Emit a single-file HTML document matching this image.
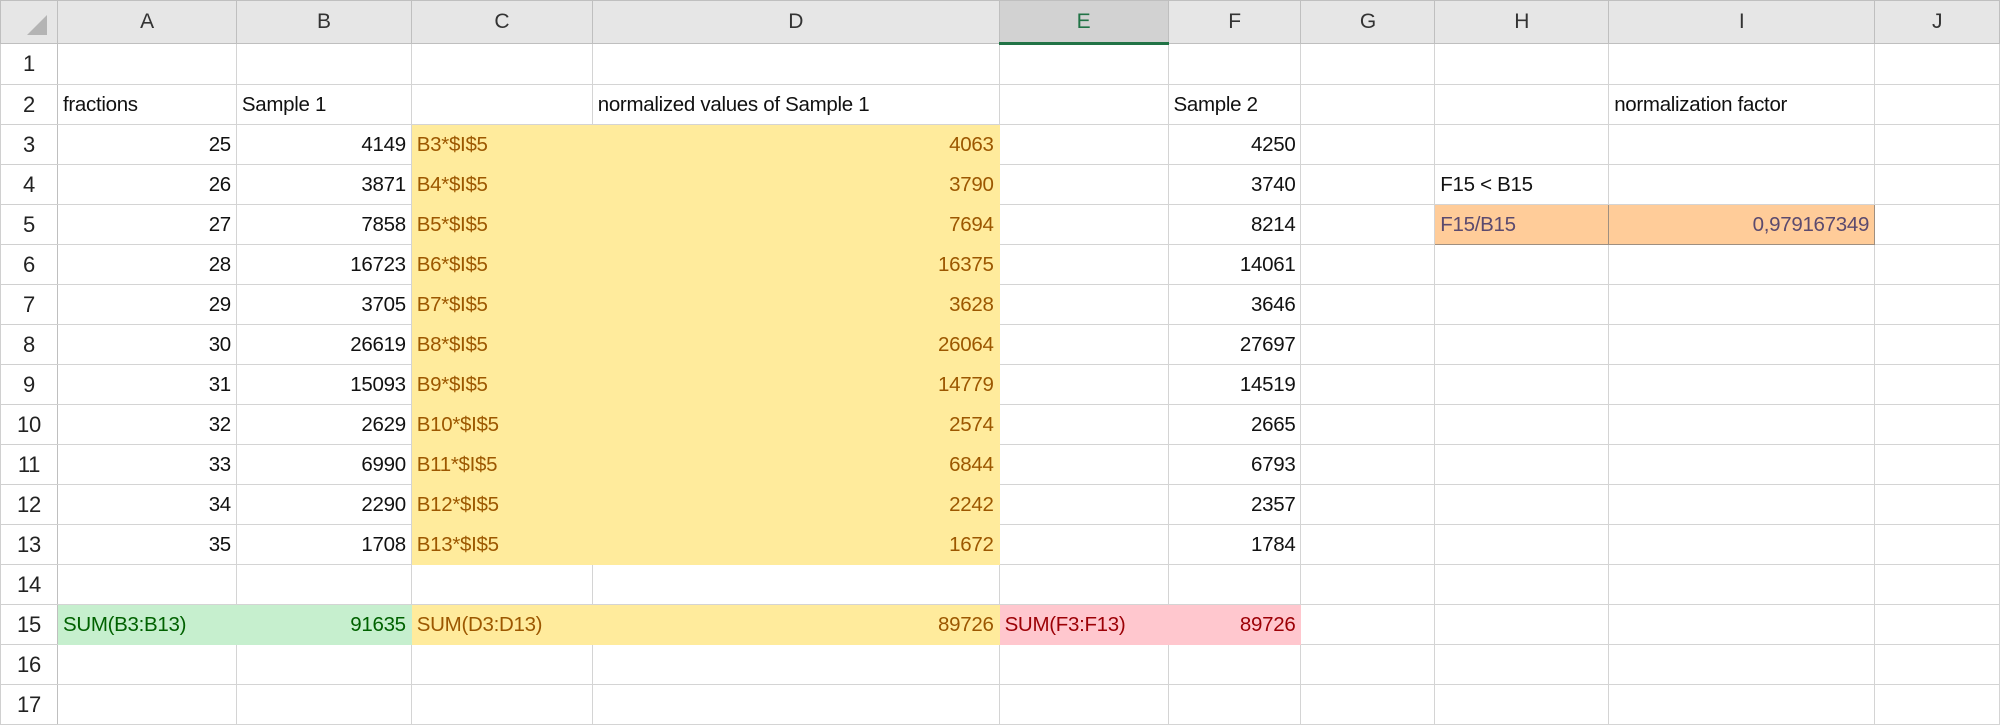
<!DOCTYPE html>
<html><head><style>
body{margin:0;width:2000px;height:722px;overflow:hidden;background:#fff;font-family:"Liberation Sans",sans-serif;}
table{border-collapse:collapse;table-layout:fixed;position:absolute;left:0;top:0;}
td{height:39px;border:1px solid #d4d4d4;padding:0 5px;font-size:20.5px;color:#111;white-space:nowrap;overflow:hidden;letter-spacing:-0.3px;}
td.h{background:#fff;text-align:center;color:#222;border-color:#d0d0d0;border-right-color:#bfbfbf;font-size:22px;}
tr.top td{height:41px;background:#e6e6e6;text-align:center;color:#333;border-color:#bfbfbf;font-size:21px;}
.r{text-align:right}
.y{background:#ffeb9c;color:#9c5700;border-color:#ffeb9c}
.g{background:#c6efce;color:#006100;border-color:#c6efce}
.p{background:#ffc7ce;color:#9c0006;border-color:#ffc7ce}
.o{background:#ffcc99;color:#5b4a6e;border:1px solid #9f8f80}
tr.top td.sel{background:#d2d2d2;color:#217346;border-bottom:3px solid #217346}
</style></head><body>
<table>
<colgroup><col style="width:57px"><col style="width:179px"><col style="width:175px"><col style="width:181px"><col style="width:407px"><col style="width:169px"><col style="width:133px"><col style="width:134px"><col style="width:174px"><col style="width:266px"><col style="width:125px"></colgroup>
<tr class="top"><td><svg width="24" height="24" style="position:relative;left:8px;top:6px"><polygon points="22,2 22,22 2,22" fill="#b4b4b4"/></svg></td><td>A</td><td>B</td><td>C</td><td>D</td><td class="sel">E</td><td>F</td><td>G</td><td>H</td><td>I</td><td>J</td></tr>
<tr><td class="h">1</td><td></td><td></td><td></td><td></td><td></td><td></td><td></td><td></td><td></td><td></td></tr>
<tr><td class="h">2</td><td>fractions</td><td>Sample 1</td><td></td><td>normalized values of Sample 1</td><td></td><td>Sample 2</td><td></td><td></td><td>normalization factor</td><td></td></tr>
<tr><td class="h">3</td><td class="r">25</td><td class="r">4149</td><td class="y">B3*$I$5</td><td class="y r">4063</td><td></td><td class="r">4250</td><td></td><td></td><td></td><td></td></tr>
<tr><td class="h">4</td><td class="r">26</td><td class="r">3871</td><td class="y">B4*$I$5</td><td class="y r">3790</td><td></td><td class="r">3740</td><td></td><td>F15 &lt; B15</td><td></td><td></td></tr>
<tr><td class="h">5</td><td class="r">27</td><td class="r">7858</td><td class="y">B5*$I$5</td><td class="y r">7694</td><td></td><td class="r">8214</td><td></td><td class="o">F15/B15</td><td class="o r">0,979167349</td><td></td></tr>
<tr><td class="h">6</td><td class="r">28</td><td class="r">16723</td><td class="y">B6*$I$5</td><td class="y r">16375</td><td></td><td class="r">14061</td><td></td><td></td><td></td><td></td></tr>
<tr><td class="h">7</td><td class="r">29</td><td class="r">3705</td><td class="y">B7*$I$5</td><td class="y r">3628</td><td></td><td class="r">3646</td><td></td><td></td><td></td><td></td></tr>
<tr><td class="h">8</td><td class="r">30</td><td class="r">26619</td><td class="y">B8*$I$5</td><td class="y r">26064</td><td></td><td class="r">27697</td><td></td><td></td><td></td><td></td></tr>
<tr><td class="h">9</td><td class="r">31</td><td class="r">15093</td><td class="y">B9*$I$5</td><td class="y r">14779</td><td></td><td class="r">14519</td><td></td><td></td><td></td><td></td></tr>
<tr><td class="h">10</td><td class="r">32</td><td class="r">2629</td><td class="y">B10*$I$5</td><td class="y r">2574</td><td></td><td class="r">2665</td><td></td><td></td><td></td><td></td></tr>
<tr><td class="h">11</td><td class="r">33</td><td class="r">6990</td><td class="y">B11*$I$5</td><td class="y r">6844</td><td></td><td class="r">6793</td><td></td><td></td><td></td><td></td></tr>
<tr><td class="h">12</td><td class="r">34</td><td class="r">2290</td><td class="y">B12*$I$5</td><td class="y r">2242</td><td></td><td class="r">2357</td><td></td><td></td><td></td><td></td></tr>
<tr><td class="h">13</td><td class="r">35</td><td class="r">1708</td><td class="y">B13*$I$5</td><td class="y r">1672</td><td></td><td class="r">1784</td><td></td><td></td><td></td><td></td></tr>
<tr><td class="h">14</td><td></td><td></td><td></td><td></td><td></td><td></td><td></td><td></td><td></td><td></td></tr>
<tr><td class="h">15</td><td class="g">SUM(B3:B13)</td><td class="g r">91635</td><td class="y">SUM(D3:D13)</td><td class="y r">89726</td><td class="p">SUM(F3:F13)</td><td class="p r">89726</td><td></td><td></td><td></td><td></td></tr>
<tr><td class="h">16</td><td></td><td></td><td></td><td></td><td></td><td></td><td></td><td></td><td></td><td></td></tr>
<tr><td class="h">17</td><td></td><td></td><td></td><td></td><td></td><td></td><td></td><td></td><td></td><td></td></tr>
</table>
</body></html>
